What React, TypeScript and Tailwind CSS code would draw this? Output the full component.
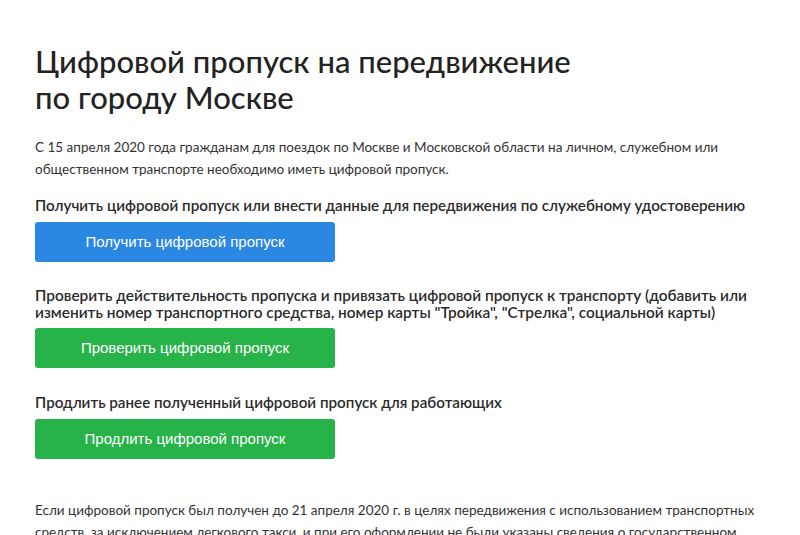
export default function App() {
  return (
    <div className="h-[535px] w-[800px] overflow-hidden bg-white pl-[35px] pr-[30px] pt-[43px] text-[#333] [font-family:Lato,sans-serif]">
      <h1 className="text-[31px] font-medium leading-[36px] text-[#232323]">
        Цифровой пропуск на передвижение
        <br />
        по городу Москве
      </h1>

      <p className="mt-[21px] text-[13.5px] leading-[22px] text-[#333]">
        С 15 апреля 2020 года гражданам для поездок по Москве и Московской области на личном, служебном или
        <br />
        общественном транспорте необходимо иметь цифровой пропуск.
      </p>

      <section className="mt-[17px]">
        <p className="text-[15.2px] font-semibold leading-[17px] text-[#2b2b2b]">
          Получить цифровой пропуск или внести данные для передвижения по служебному удостоверению
        </p>
        <button
          type="button"
          className="mt-[8px] flex h-[40px] w-[300px] items-center justify-center rounded-[3px] bg-[#2b88e2] text-[15px] text-white [font-family:'Liberation_Sans',sans-serif]"
        >
          Получить цифровой пропуск
        </button>
      </section>

      <section className="mt-[25px]">
        <p className="text-[15.4px] font-semibold leading-[17px] text-[#2b2b2b]">
          Проверить действительность пропуска и привязать цифровой пропуск к транспорту (добавить или
          <br />
          изменить номер транспортного средства, номер карты "Тройка", "Стрелка", социальной карты)
        </p>
        <button
          type="button"
          className="mt-[7px] flex h-[40px] w-[300px] items-center justify-center rounded-[3px] bg-[#27b24a] text-[15px] text-white [font-family:'Liberation_Sans',sans-serif]"
        >
          Проверить цифровой пропуск
        </button>
      </section>

      <section className="mt-[26px]">
        <p className="text-[15.2px] font-semibold leading-[17px] text-[#2b2b2b]">
          Продлить ранее полученный цифровой пропуск для работающих
        </p>
        <button
          type="button"
          className="mt-[8px] flex h-[40px] w-[300px] items-center justify-center rounded-[3px] bg-[#27b24a] text-[15px] text-white [font-family:'Liberation_Sans',sans-serif]"
        >
          Продлить цифровой пропуск
        </button>
      </section>

      <p className="mt-[40px] text-[13.5px] leading-[22px] text-[#333]">
        Если цифровой пропуск был получен до 21 апреля 2020 г. в целях передвижения с использованием транспортных
        <br />
        средств, за исключением легкового такси, и при его оформлении не были указаны сведения о государственном
        регистрационном знаке транспортного средства
      </p>
    </div>
  );
}
